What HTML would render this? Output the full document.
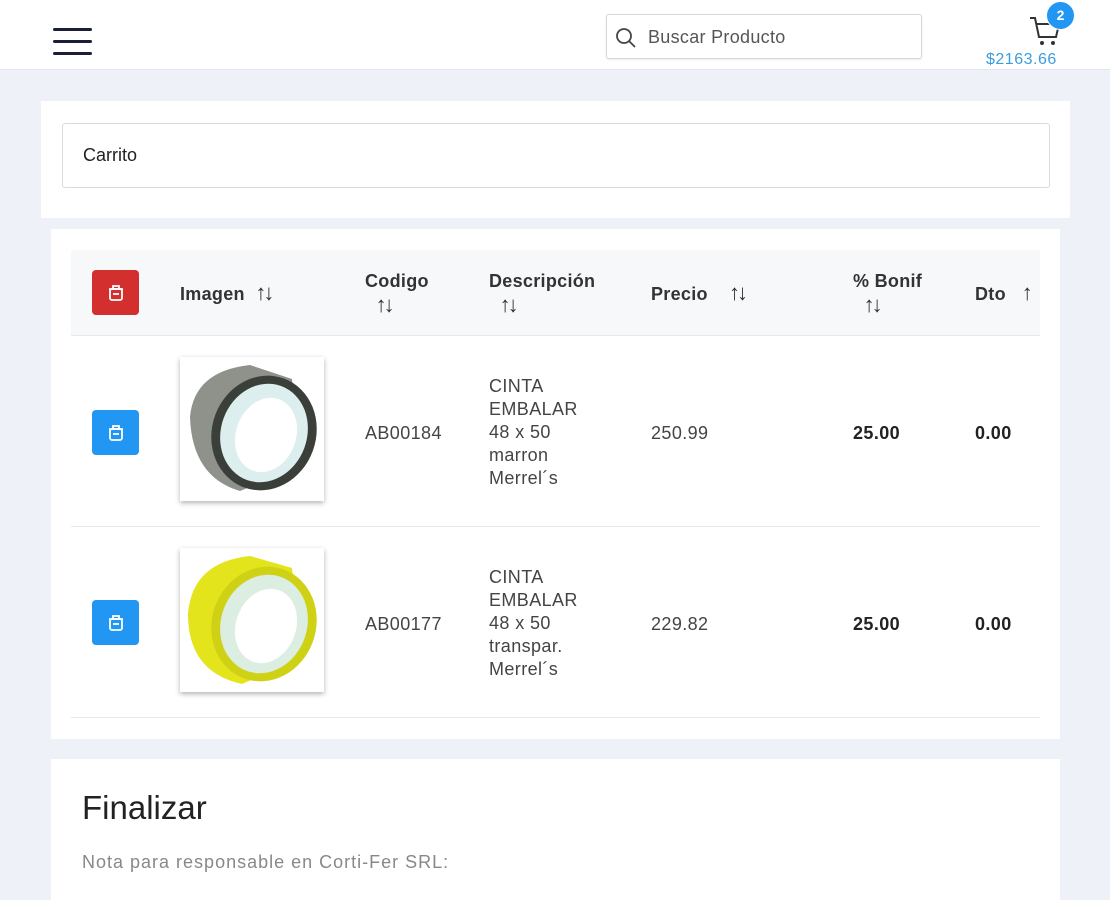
<!DOCTYPE html>
<html><head><meta charset="utf-8"><style>
*{margin:0;padding:0;box-sizing:border-box}
html,body{width:1110px;height:900px;overflow:hidden}
body{background:#eef1f7;font-family:"Liberation Sans",sans-serif;position:relative;color:#222}
.a{position:absolute}
.hdr{left:0;top:0;width:1110px;height:70px;background:#fff;border-bottom:1px solid #e3e6ec}
.bar{left:53px;width:39px;height:3px;background:#1a1f36;border-radius:2px}
.srch{left:606px;top:14px;width:316px;height:45px;border:1px solid #d5d8dd;border-radius:3px;background:#fff;box-shadow:0 1px 2px rgba(0,0,0,.08)}
.card{background:#fff}
.th{font-weight:bold;font-size:18px;color:#333;letter-spacing:.3px;line-height:24px}
.td{font-size:18px;color:#444;line-height:23px;letter-spacing:.4px}
.btn{width:47px;height:45px;border-radius:4px;display:flex;align-items:center;justify-content:center}
.img{width:144px;height:144px;background:#fff;box-shadow:0 2px 5px rgba(0,0,0,.3)}
.ar{font-weight:normal;font-size:22px;letter-spacing:-3px}
</style></head><body>
<div class="a hdr"></div>
<div class="a bar" style="top:28px"></div>
<div class="a bar" style="top:40px"></div>
<div class="a bar" style="top:52px"></div>
<div class="a srch"></div>
<svg class="a" style="left:614px;top:26px" width="24" height="24" viewBox="0 0 24 24"><circle cx="10" cy="10" r="7" fill="none" stroke="#444" stroke-width="1.8"/><line x1="15" y1="15" x2="21" y2="21" stroke="#444" stroke-width="1.8"/></svg>
<div class="a" style="left:648px;top:27px;font-size:18px;color:#555;letter-spacing:.3px">Buscar Producto</div>
<svg class="a" style="left:1028px;top:14px" width="34" height="34" viewBox="0 0 34 34"><path d="M2 4h5l4 19h17l3-13H9" fill="none" stroke="#333" stroke-width="2"/><circle cx="14" cy="29" r="2" fill="#333"/><circle cx="25" cy="29" r="2" fill="#333"/></svg>
<div class="a" style="left:1046px;top:1px;width:29px;height:29px;border-radius:50%;background:#2196f3;color:#fff;font-weight:bold;font-size:14px;text-align:center;line-height:27px;border:1px solid #fff">2</div>
<div class="a" style="left:986px;top:51px;font-size:16px;color:#3b9be0;letter-spacing:.5px">$2163.66</div>

<div class="a card" style="left:41px;top:101px;width:1029px;height:117px"></div>
<div class="a" style="left:62px;top:123px;width:988px;height:65px;border:1px solid #d8dbe0;border-radius:3px"></div>
<div class="a" style="left:83px;top:145px;font-size:18px;color:#222">Carrito</div>

<div class="a card" style="left:51px;top:229px;width:1009px;height:510px"></div>
<div class="a" style="left:71px;top:250px;width:969px;height:86px;background:#f7f8fa;border-bottom:1px solid #e6e8eb"></div>
<div class="a" style="left:71px;top:526px;width:969px;height:1px;background:#e6e8eb"></div>
<div class="a" style="left:71px;top:717px;width:969px;height:1px;background:#e6e8eb"></div>

<div class="a btn" style="left:92px;top:270px;background:#d32f2f"><svg width="20" height="20" viewBox="0 0 20 20" fill="none" stroke="#fff" stroke-width="1.8"><rect x="4" y="6" width="12" height="11" rx="2"/><path d="M3 6h14M7 6V3h6v3M7 11h6"/></svg></div>
<div class="a th" style="left:180px;top:281px">Imagen &nbsp;<span class="ar">↑↓</span></div>
<div class="a th" style="left:365px;top:269px">Codigo<br>&nbsp;&nbsp;<span class="ar">↑↓</span></div>
<div class="a th" style="left:489px;top:269px">Descripción<br>&nbsp;&nbsp;<span class="ar">↑↓</span></div>
<div class="a th" style="left:651px;top:281px">Precio &nbsp;&nbsp;&nbsp;<span class="ar">↑↓</span></div>
<div class="a th" style="left:853px;top:269px">% Bonif<br>&nbsp;&nbsp;<span class="ar">↑↓</span></div>
<div class="a th" style="left:975px;top:281px">Dto &nbsp;&nbsp;<span class="ar">↑</span></div>

<div class="a btn" style="left:92px;top:410px;background:#2196f3"><svg width="20" height="20" viewBox="0 0 20 20" fill="none" stroke="#fff" stroke-width="1.8"><rect x="4" y="6" width="12" height="11" rx="2"/><path d="M3 6h14M7 6V3h6v3M7 11h6"/></svg></div>
<div class="a img" style="left:180px;top:357px"><svg width="144" height="144" viewBox="0 0 144 144"><path d="M10 60 Q14 14 70 8 L112 22 L120 110 L60 134 Q12 120 10 60Z" fill="#8f928a"/><ellipse cx="84" cy="76" rx="52" ry="58" transform="rotate(20 84 76)" fill="#3b3f3a"/><ellipse cx="84" cy="76" rx="43" ry="50" transform="rotate(20 84 76)" fill="#dceeed"/><ellipse cx="86" cy="78" rx="30" ry="38" transform="rotate(20 86 78)" fill="#fff"/></svg></div>
<div class="a td" style="left:365px;top:422px">AB00184</div>
<div class="a td" style="left:489px;top:375px">CINTA<br>EMBALAR<br>48 x 50<br>marron<br>Merrel´s</div>
<div class="a td" style="left:651px;top:422px">250.99</div>
<div class="a td" style="left:853px;top:422px;font-weight:bold;color:#222">25.00</div>
<div class="a td" style="left:975px;top:422px;font-weight:bold;color:#222">0.00</div>

<div class="a btn" style="left:92px;top:600px;background:#2196f3"><svg width="20" height="20" viewBox="0 0 20 20" fill="none" stroke="#fff" stroke-width="1.8"><rect x="4" y="6" width="12" height="11" rx="2"/><path d="M3 6h14M7 6V3h6v3M7 11h6"/></svg></div>
<div class="a img" style="left:180px;top:548px"><svg width="144" height="144" viewBox="0 0 144 144"><path d="M8 66 Q12 14 70 8 L112 20 L122 110 L62 136 Q8 124 8 66Z" fill="#e3e41c"/><ellipse cx="84" cy="76" rx="52" ry="58" transform="rotate(20 84 76)" fill="#cfd214"/><ellipse cx="84" cy="76" rx="43" ry="50" transform="rotate(20 84 76)" fill="#dceee2"/><ellipse cx="86" cy="78" rx="30" ry="38" transform="rotate(20 86 78)" fill="#fff"/></svg></div>
<div class="a td" style="left:365px;top:613px">AB00177</div>
<div class="a td" style="left:489px;top:566px">CINTA<br>EMBALAR<br>48 x 50<br>transpar.<br>Merrel´s</div>
<div class="a td" style="left:651px;top:613px">229.82</div>
<div class="a td" style="left:853px;top:613px;font-weight:bold;color:#222">25.00</div>
<div class="a td" style="left:975px;top:613px;font-weight:bold;color:#222">0.00</div>

<div class="a card" style="left:51px;top:759px;width:1009px;height:141px"></div>
<div class="a" style="left:82px;top:789px;font-size:33px;color:#222">Finalizar</div>
<div class="a" style="left:82px;top:852px;font-size:18px;color:#888;letter-spacing:1px">Nota para responsable en Corti-Fer SRL:</div>
</body></html>
